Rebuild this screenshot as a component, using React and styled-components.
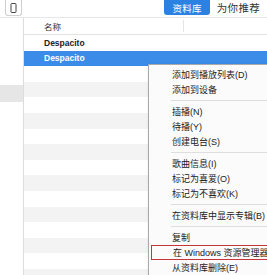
import React from 'react';
import styled, { createGlobalStyle } from 'styled-components';

const GlobalStyle = createGlobalStyle`
  html, body {
    margin: 0;
    padding: 0;
    background: #ffffff;
  }
  body {
    font-family: "Liberation Sans", "Noto Sans CJK SC", sans-serif;
  }
`;

const Screen = styled.div`
  position: relative;
  width: 267px;
  height: 275px;
  overflow: hidden;
  background: #ffffff;
`;

const TopBar = styled.div`
  height: 18px;
  display: flex;
  align-items: flex-start;
  justify-content: space-between;
  border-bottom: 1px solid #e6e6e6;
  box-sizing: border-box;
`;

const DeviceButton = styled.div`
  margin-left: 5px;
  width: 17px;
  height: 16px;
  box-sizing: border-box;
  border: 1px solid #cfcfcf;
  border-top: none;
  border-radius: 0 0 3px 3px;
  display: flex;
  align-items: center;
  justify-content: center;
`;

const Tabs = styled.div`
  display: flex;
  align-items: center;
  gap: 7px;
  margin-right: 7px;
`;

const Tab = styled.div`
  height: 15px;
  padding: 0 ${p => (p.active ? 8 : 0)}px;
  display: flex;
  align-items: center;
  font-size: ${p => (p.active ? 9.5 : 10.5)}px;
  color: ${p => (p.active ? '#ffffff' : '#333333')};
  background: ${p => (p.active ? '#2c82e2' : 'transparent')};
  border-radius: 0 0 3px 3px;
  letter-spacing: 0.3px;
`;

const Body = styled.div`
  display: flex;
  height: 257px;
  overflow: hidden;
`;

const Sidebar = styled.div`
  width: 23px;
  flex-shrink: 0;
  border-right: 1px solid #dcdcdc;
  padding-top: 67px;
`;

const SideItem = styled.div`
  height: 17px;
  background: ${p => (p.active ? '#e6e6e6' : 'transparent')};
`;

const Table = styled.div`
  flex: 1;
  display: flex;
  flex-direction: column;
  overflow: hidden;
`;

const HeaderRow = styled.div`
  height: 17px;
  flex-shrink: 0;
  display: flex;
  align-items: center;
  border-bottom: 1px solid #e2e2e2;
  box-sizing: border-box;
  font-size: 8.5px;
  color: #333333;
`;

const HeaderCell = styled.div`
  width: ${p => p.w}px;
  height: 12px;
  display: flex;
  align-items: center;
  padding-left: 20px;
  box-sizing: border-box;
  border-right: 1px solid #e4e4e4;
`;

const Row = styled.div`
  height: 15.6px;
  flex-shrink: 0;
  display: flex;
  align-items: center;
  padding-left: 20px;
  font-size: 8.5px;
  font-weight: 700;
  color: ${p => (p.selected ? '#ffffff' : '#222222')};
  background: ${p => (p.selected ? '#3a8ce8' : p.striped ? '#f3f3f3' : '#ffffff')};
`;

const Menu = styled.div`
  position: absolute;
  left: 148px;
  top: 64px;
  width: 140px;
  padding: 2px 0;
  background: #fbfbfb;
  border: 1px solid #a9a9a9;
  box-shadow: 1px 1px 3px rgba(0, 0, 0, 0.15);
  font-size: 9px;
  color: #222222;
`;

const MenuItem = styled.div`
  height: 15px;
  display: flex;
  align-items: center;
  box-sizing: border-box;
  padding-left: ${p => (p.marked ? 21 : 23)}px;
  margin-left: ${p => (p.marked ? 2 : 0)}px;
  border: ${p => (p.marked ? '1.5px solid #c6343c' : 'none')};
  white-space: nowrap;
`;

const Separator = styled.div`
  height: 7px;
  display: flex;
  align-items: center;
  padding-left: 22px;

  &::after {
    content: '';
    flex: 1;
    height: 1px;
    background: #dedede;
  }
`;

const PhoneIcon = () => (
  <svg width="7" height="10" viewBox="0 0 7 10">
    <rect x="1" y="0.5" width="5" height="9" rx="0.8" fill="none" stroke="#444" strokeWidth="1" />
  </svg>
);

const menu = [
  '添加到播放列表(D)',
  '添加到设备',
  '-',
  '插播(N)',
  '待播(Y)',
  '创建电台(S)',
  '-',
  '歌曲信息(I)',
  '标记为喜爱(O)',
  '标记为不喜欢(K)',
  '-',
  '在资料库中显示专辑(B)',
  '-',
  '复制',
  '在 Windows 资源管理器中显示(W)',
  '从资料库删除(E)',
];

export default function App() {
  const rows = Array.from({ length: 14 }, (_, i) => i);

  return (
    <Screen>
      <GlobalStyle />
      <TopBar>
        <DeviceButton>
          <PhoneIcon />
        </DeviceButton>
        <Tabs>
          <Tab active>资料库</Tab>
          <Tab>为你推荐</Tab>
        </Tabs>
      </TopBar>
      <Body>
        <Sidebar>
          <SideItem active />
        </Sidebar>
        <Table>
          <HeaderRow>
            <HeaderCell w={160}>名称</HeaderCell>
          </HeaderRow>
          <Row>Despacito</Row>
          <Row selected>Despacito</Row>
          {rows.map(i => (
            <Row key={i} striped={i % 2 === 1} />
          ))}
        </Table>
      </Body>
      <Menu>
        {menu.map((label, i) =>
          label === '-' ? (
            <Separator key={i} />
          ) : (
            <MenuItem key={i} marked={label.startsWith('在 Windows')}>
              {label}
            </MenuItem>
          )
        )}
      </Menu>
    </Screen>
  );
}
